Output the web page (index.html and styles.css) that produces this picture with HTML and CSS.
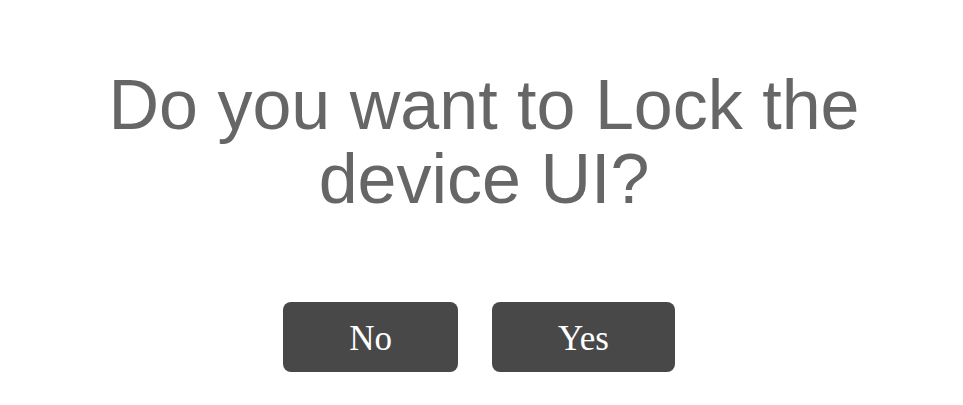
FILE: index.html
```html
<!DOCTYPE html>
<html>
<head>
<meta charset="utf-8">
<link rel="stylesheet" href="styles.css">
</head>
<body>
<div class="dialog">
  <h1 class="title">Do you want to Lock the<br>device UI?</h1>
  <div class="actions">
    <button class="btn btn-no">No</button>
    <button class="btn btn-yes">Yes</button>
  </div>
</div>
</body>
</html>
```
FILE: styles.css
```css
html, body {
  margin: 0;
  padding: 0;
  background: #ffffff;
}
.dialog {
  display: flex;
  flex-direction: column;
  align-items: center;
  padding-top: 68px;
}
.title {
  margin: 0 0 0 5px;
  font-family: "Liberation Sans", Arial, sans-serif;
  font-weight: normal;
  font-size: 70px;
  line-height: 74px;
  color: #666666;
  text-align: center;
}
.actions {
  display: flex;
  gap: 34px;
  margin-top: 86px;
  margin-right: 5px;
}
.btn {
  font-family: "Liberation Serif", "Times New Roman", serif;
  font-size: 35px;
  color: #ffffff;
  background: #484848;
  border: none;
  border-radius: 8px;
  height: 70px;
  padding: 3px 66px 0;
}
```
